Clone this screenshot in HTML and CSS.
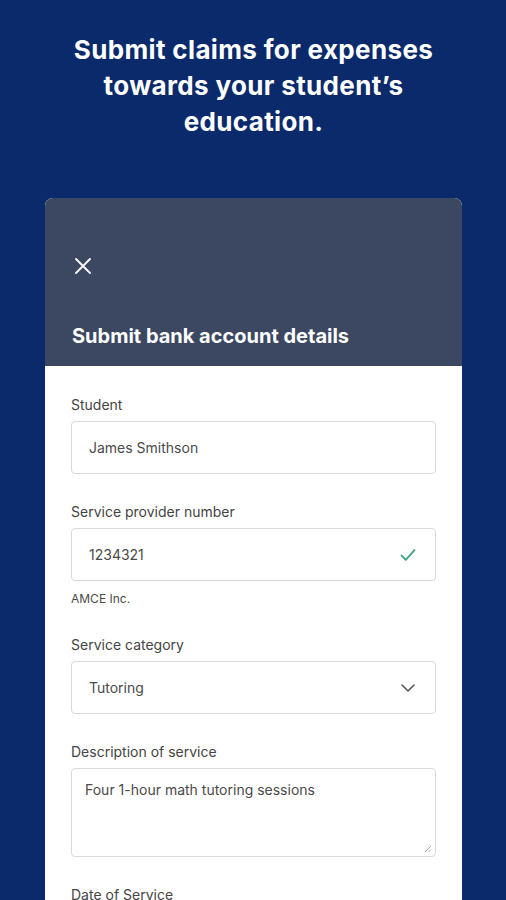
FILE: index.html
```html
<!DOCTYPE html>
<html lang="en">
<head>
    <meta charset="UTF-8">
    <meta name="viewport" content="width=device-width, initial-scale=1.0">
    <title>Submit Claims</title>
    <link rel="stylesheet" href="styles.css">
</head>
<body>
    <div class="page">
        <h1 class="hero">Submit claims for expenses towards your student’s education.</h1>

        <div class="card">
            <div class="card-header">
                <button class="close" aria-label="Close">
                    <svg width="16" height="16" viewBox="0 0 16 16">
                        <path d="M1 1 L15 15 M15 1 L1 15" stroke="#fff" stroke-width="1.8" stroke-linecap="round" fill="none"/>
                    </svg>
                </button>
                <h2 class="card-title">Submit bank account details</h2>
            </div>

            <div class="card-body">
                <div class="field">
                    <label>Student</label>
                    <div class="input">James Smithson</div>
                </div>

                <div class="field">
                    <label>Service provider number</label>
                    <div class="input">
                        <span>1234321</span>
                        <svg class="icon" width="16" height="14" viewBox="0 0 16 14">
                            <path d="M1.5 7.5 L5.8 11.8 L14.5 2.2" stroke="#3aa67c" stroke-width="1.8" fill="none" stroke-linecap="round" stroke-linejoin="round"/>
                        </svg>
                    </div>
                    <p class="helper">AMCE Inc.</p>
                </div>

                <div class="field">
                    <label>Service category</label>
                    <div class="input">
                        <span>Tutoring</span>
                        <svg class="icon" width="16" height="10" viewBox="0 0 16 10">
                            <path d="M2 2 L8 8 L14 2" stroke="#555" stroke-width="1.6" fill="none" stroke-linecap="round" stroke-linejoin="round"/>
                        </svg>
                    </div>
                </div>

                <div class="field">
                    <label>Description of service</label>
                    <div class="textarea">
                        Four 1-hour math tutoring sessions
                        <svg class="grip" width="8" height="8" viewBox="0 0 8 8">
                            <path d="M7 1 L1 7 M7 4.5 L4.5 7" stroke="#aaa" stroke-width="1" fill="none"/>
                        </svg>
                    </div>
                </div>

                <div class="field">
                    <label>Date of Service</label>
                </div>
            </div>
        </div>
    </div>
</body>
</html>
```

FILE: styles.css
```css
body {
    margin: 0;
    padding: 0;
    background-color: #0b2a6c;
    font-family: Inter, Lato, sans-serif;
    color: #333;
}
.page {
    height: 900px;
    overflow: hidden;
    padding: 0 44px 0 45px;
}
.hero {
    margin: 0;
    padding: 32px 0 0;
    text-align: center;
    color: #fff;
    font-size: 26px;
    line-height: 36px;
    font-weight: 700;
    letter-spacing: 0.35px;
}
.card {
    margin-top: 58px;
    border-radius: 8px 8px 0 0;
    overflow: hidden;
    background: #fff;
}
.card-header {
    background: #3c4862;
    padding: 56px 26px 17px 27px;
}
.close {
    display: block;
    width: 24px;
    height: 24px;
    padding: 4px;
    margin-left: -1px;
    background: none;
    border: none;
}
.card-title {
    margin: 45px 0 0;
    color: #fff;
    font-size: 20px;
    line-height: 26px;
    font-weight: 700;
}
.card-body {
    padding: 30px 26px 0 26px;
}
.field {
    margin-bottom: 29px;
}
.field label {
    display: block;
    font-size: 14px;
    line-height: 18px;
    color: #444;
    margin-bottom: 7px;
}
.input {
    height: 53px;
    box-sizing: border-box;
    border: 1px solid #d9d9d9;
    border-radius: 4px;
    padding: 0 19px 0 17px;
    display: flex;
    align-items: center;
    justify-content: space-between;
    font-size: 14px;
    color: #4a4a4a;
}
.helper {
    margin: 10px 0 3px;
    font-size: 12px;
    line-height: 16px;
    color: #4a4a4a;
}
.textarea {
    position: relative;
    height: 89px;
    box-sizing: border-box;
    border: 1px solid #d9d9d9;
    border-radius: 4px;
    padding: 12px 13px;
    font-size: 14px;
    line-height: 18px;
    color: #4a4a4a;
}
.grip {
    position: absolute;
    right: 3px;
    bottom: 3px;
}
```
